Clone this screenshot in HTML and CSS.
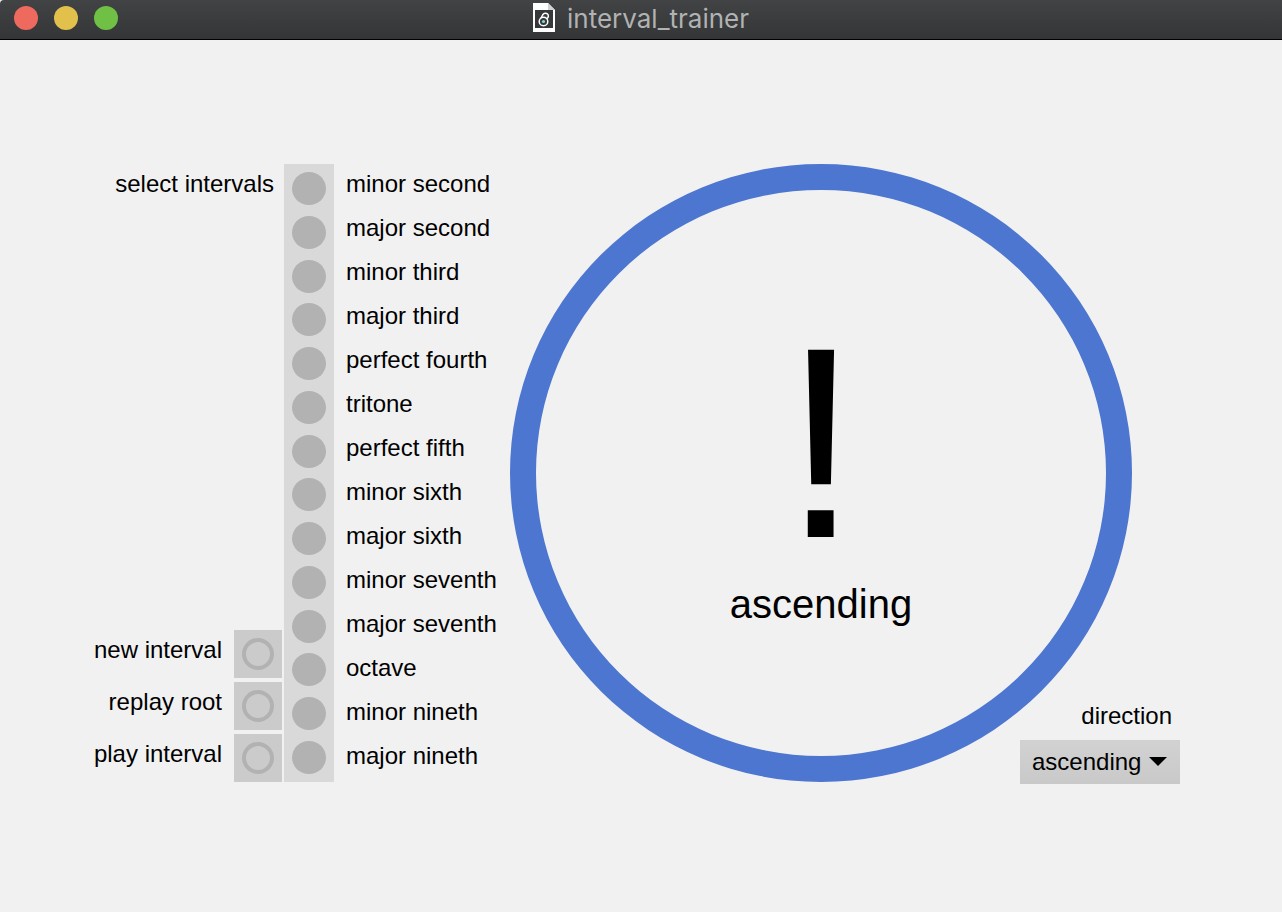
FILE: index.html
```html
<!DOCTYPE html>
<html lang="en">
<head>
<meta charset="utf-8">
<title>interval_trainer</title>
<link rel="stylesheet" href="styles.css">
</head>
<body>
<header class="titlebar">
  <div class="lights">
    <button class="light close" type="button" aria-label="Close"></button>
    <button class="light minimise" type="button" aria-label="Minimise"></button>
    <button class="light zoom" type="button" aria-label="Zoom"></button>
  </div>
  <h1 class="title">
    <svg class="doc" viewBox="0 0 22 29" aria-hidden="true">
      <path d="M0 0H15L22 7V29H0Z" fill="#fff"/>
      <path d="M15 0V7H22Z" fill="#d2d2d2"/>
      <rect x="2" y="7" width="18" height="18" fill="#363839"/>
      <circle cx="10.500" cy="18.500" r="4.300" fill="none" stroke="#fff" stroke-width="1.500"/>
      <path d="M8 15L10 11.500A2.900 2.900 0 1 1 14 15.500" fill="none" stroke="#fff" stroke-width="1.500"/>
      <circle cx="10.500" cy="18.500" r="1.600" fill="#7fd6dc"/>
    </svg>
    <span>interval_trainer</span>
  </h1>
</header>
<main class="patch">
  <section class="side">
    <h2 class="heading" id="pick">select intervals</h2>
    <div class="actions">
      <label for="new">new interval</label><button class="bang" id="new" type="button"></button>
      <label for="root">replay root</label><button class="bang" id="root" type="button"></button>
      <label for="play">play interval</label><button class="bang" id="play" type="button"></button>
    </div>
  </section>
  <div class="toggles" role="group" aria-labelledby="pick">
    <input type="checkbox" id="i1"><input type="checkbox" id="i2"><input type="checkbox" id="i3"><input type="checkbox" id="i4"><input type="checkbox" id="i5"><input type="checkbox" id="i6"><input type="checkbox" id="i7"><input type="checkbox" id="i8"><input type="checkbox" id="i9"><input type="checkbox" id="i10"><input type="checkbox" id="i11"><input type="checkbox" id="i12"><input type="checkbox" id="i13"><input type="checkbox" id="i14">
  </div>
  <div class="names">
    <label for="i1">minor second</label>
    <label for="i2">major second</label>
    <label for="i3">minor third</label>
    <label for="i4">major third</label>
    <label for="i5">perfect fourth</label>
    <label for="i6">tritone</label>
    <label for="i7">perfect fifth</label>
    <label for="i8">minor sixth</label>
    <label for="i9">major sixth</label>
    <label for="i10">minor seventh</label>
    <label for="i11">major seventh</label>
    <label for="i12">octave</label>
    <label for="i13">minor nineth</label>
    <label for="i14">major nineth</label>
  </div>
  <section class="ring">
    <div class="mark">!</div>
    <div class="answer">ascending</div>
  </section>
  <div class="direction">
    <label for="dir">direction</label>
    <div class="menu">
      <select id="dir">
        <option>ascending</option>
        <option>descending</option>
      </select>
      <svg class="arrow" viewBox="0 0 18 9" aria-hidden="true"><path d="M0 0H18L9 9Z"/></svg>
    </div>
  </div>
</main>
</body>
</html>
```
FILE: styles.css
```css
* {
  box-sizing: border-box;
}

body {
  margin: 0;
  min-height: 100vh;
  background: #f1f1f1;
  color: #000;
  font: 24px/40px "Liberation Sans", Arial, sans-serif;
}

.titlebar {
  display: grid;
  grid-template-columns: 1fr auto 1fr;
  height: 40px;
  padding: 0 14px;
  background: linear-gradient(#414344, #333536);
  border-bottom: 1px solid #000;
  border-top-left-radius: 4px;
}

.lights {
  display: flex;
  gap: 16px;
  padding-top: 6px;
}

.light {
  width: 24px;
  height: 24px;
  padding: 0;
  border: 0;
  border-radius: 50%;
}

.close {
  background: #ee6a5f;
}

.minimise {
  background: #e1c04c;
}

.zoom {
  background: #71c046;
}

.title {
  display: flex;
  gap: 12px;
  margin: 0;
  color: #b1b2b2;
  font: 400 26px/38px Inter, sans-serif;
}

.doc {
  width: 22px;
  height: 29px;
  margin-top: 3px;
}

.patch {
  display: grid;
  grid-template-columns: 284px 50px 176px minmax(0, 1fr) 112px 48px;
  padding: 124px 102px 128px 0;
}

.side {
  display: flex;
  flex-direction: column;
  justify-content: space-between;
  align-items: flex-end;
  padding-right: 2px;
}

.heading {
  margin: 0;
  padding-right: 8px;
  font-size: 24px;
  font-weight: 400;
}

.actions {
  display: grid;
  grid-template-columns: auto 48px;
  gap: 4px 12px;
  text-align: right;
}

.bang {
  display: grid;
  place-items: center;
  width: 48px;
  height: 48px;
  padding: 0;
  border: 0;
  background: #cbcbcb;
}

.bang::before {
  content: "";
  box-sizing: border-box;
  width: 32px;
  height: 32px;
  border: 4px solid #b2b2b2;
  border-radius: 50%;
}

.toggles {
  display: flex;
  flex-direction: column;
  justify-content: space-between;
  align-items: center;
  height: 618px;
  padding: 8px 0;
  background: #d9d9d9;
}

.toggles input {
  width: 34px;
  height: 33px;
  margin: 0;
  appearance: none;
  background: #b2b2b2;
  border-radius: 50%;
}

.toggles input:checked {
  background: #4d76d1;
}

.names {
  display: flex;
  flex-direction: column;
  gap: 4px;
  padding-left: 12px;
  white-space: nowrap;
}

.ring {
  grid-column: 4 / 6;
  grid-row: 1;
  display: flex;
  flex-direction: column;
  align-items: center;
  gap: 38px;
  padding-top: 153px;
  border: 26px solid #4d76d1;
  border-radius: 50%;
}

.mark {
  font-size: 272px;
  line-height: 200px;
}

.answer {
  font-size: 40px;
  line-height: 46px;
}

.direction {
  grid-column: 5 / 7;
  grid-row: 1;
  align-self: end;
  margin-bottom: -2px;
  text-align: right;
}

.direction label {
  display: block;
  padding: 0 8px 4px 0;
}

.menu {
  position: relative;
}

.menu select {
  display: block;
  width: 100%;
  height: 44px;
  padding: 0 12px;
  appearance: none;
  border: 0;
  border-radius: 0;
  background: linear-gradient(#d2d2d2, #c9c9c9);
  color: #000;
  font: inherit;
}

.arrow {
  position: absolute;
  top: 17px;
  right: 13px;
  width: 18px;
  height: 9px;
  pointer-events: none;
}
```
